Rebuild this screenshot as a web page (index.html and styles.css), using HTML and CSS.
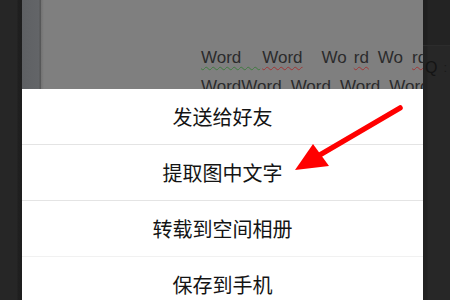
FILE: index.html
```html
<!DOCTYPE html>
<html lang="zh-CN">
<head>
    <meta charset="UTF-8">
    <meta name="viewport" content="width=device-width, initial-scale=1.0">
    <title>图片菜单</title>
    <link rel="stylesheet" href="styles.css">
</head>
<body>
    <div class="screen">
        <div class="side-left"></div>

        <div class="phone">
            <div class="doc">
                <div class="doc-margin"></div>
                <div class="doc-page">
                    <div class="doc-line"><span class="w green">Word&nbsp;&nbsp;&nbsp;&nbsp;</span><span class="w red g1">Word</span><span class="w g2">Wo</span><span class="w red g3">rd</span><span class="w g4">Wo</span><span class="w red g4">rd</span></div>
                    <div class="doc-line"><span class="w">WordWord</span><span class="w g4">Word</span><span class="w g4">Word</span><span class="w g4">Word</span></div>
                </div>
            </div>

            <div class="sheet">
                <div class="sheet-item">发送给好友</div>
                <div class="sheet-item">提取图中文字</div>
                <div class="sheet-item light">转载到空间相册</div>
                <div class="sheet-item light">保存到手机</div>
            </div>
        </div>

        <div class="side-right">
            <div class="side-top"></div>
            <div class="side-glyph">Q<span>:</span></div>
        </div>

        <!-- red pointer drawn over the menu -->
        <svg class="pointer" viewBox="0 0 450 300" width="450" height="300">
            <line x1="400" y1="108" x2="318" y2="156" stroke="#ff0000" stroke-width="5.5" stroke-linecap="round"/>
            <polygon points="295,170 313,144 329,166" fill="#ff0000"/>
        </svg>
    </div>
</body>
</html>
```

FILE: styles.css
```css
* {
    margin: 0;
    padding: 0;
    box-sizing: border-box;
}

body {
    background-color: #262626;
    font-family: "Noto Sans CJK SC", "Noto Sans", sans-serif;
    overflow: hidden;
}

.screen {
    position: relative;
    display: flex;
    width: 450px;
    height: 300px;
}

.side-left {
    width: 22px;
    flex-shrink: 0;
    background: linear-gradient(to right, #262626 0, #262626 17px, #1f1f1f 18px, #1e1e1e 22px);
}

.phone {
    width: 401px;
    flex-shrink: 0;
    display: flex;
    flex-direction: column;
    overflow: hidden;
}

.doc {
    height: 89px;
    flex-shrink: 0;
    display: flex;
    background-color: #7f7f7f;
    overflow: hidden;
}

.doc-margin {
    width: 19px;
    flex-shrink: 0;
    background: linear-gradient(to right, #5e6063, #636568 17px, #545556 18px, #5a5a5a 19px);
}

.doc-page {
    flex: 1;
    padding: 43px 0 0 160px;
    background: linear-gradient(to right, #727272 0, #7f7f7f 3px);
    white-space: nowrap;
    overflow: hidden;
    font-family: "Liberation Sans", Arial, sans-serif;
    font-size: 17px;
    color: #2b2b2c;
}

.doc-line {
    height: 29px;
    line-height: 29px;
}

.w {
    text-decoration-line: underline;
    text-decoration-style: wavy;
    text-decoration-color: transparent;
    text-decoration-thickness: 1px;
    text-underline-offset: 3px;
}

.w.green {
    text-decoration-color: #3f7a3f;
}

.w.red {
    text-decoration-color: #a03535;
}

.g1 {
    margin-left: 2px;
}

.g2 {
    margin-left: 19px;
}

.g3 {
    margin-left: 7px;
}

.g4 {
    margin-left: 9px;
}

.sheet {
    flex: 1;
    background-color: #ffffff;
}

.sheet-item {
    height: 56px;
    display: flex;
    align-items: center;
    justify-content: center;
    font-size: 20px;
    color: #141414;
    border-bottom: 1px solid #e4e4e4;
    padding-bottom: 1px;
}

.sheet-item.light {
    border-bottom-color: #f1f1f1;
}

.side-right {
    flex: 1;
    overflow: hidden;
    background: linear-gradient(to right, #222222 0, #222222 4px, #272727 5px);
}

.side-top {
    height: 46px;
    background: linear-gradient(to right, #1f1f1f 0, #1f1f1f 4px, #232323 5px);
    border-bottom: 1px solid #2c2c2c;
}

.side-glyph {
    display: flex;
    justify-content: space-between;
    padding: 13px 3px 0 2px;
    font-family: "Liberation Sans", sans-serif;
    font-size: 16px;
    line-height: 18px;
    color: #141414;
}

.side-glyph span {
    font-size: 13px;
    color: #1a1a1a;
}

.pointer {
    position: absolute;
    left: 0;
    top: 0;
    pointer-events: none;
}
```
